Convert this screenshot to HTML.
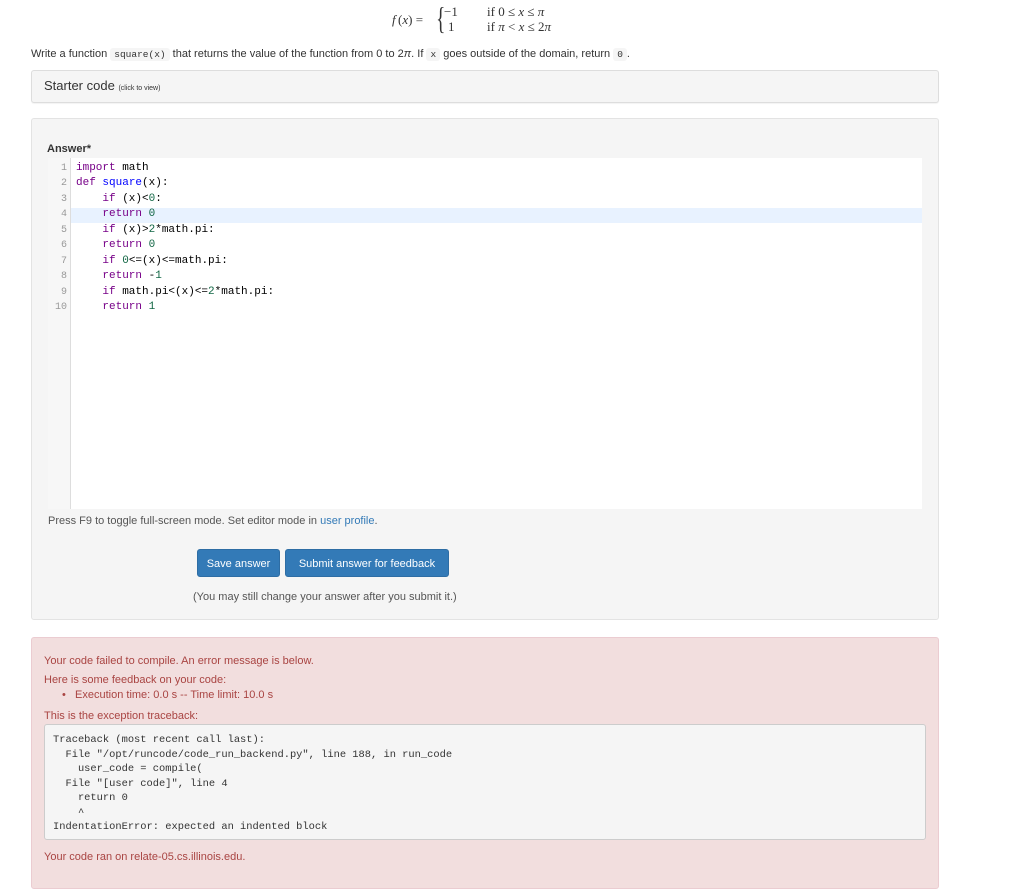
<!DOCTYPE html>
<html><head><meta charset="utf-8"><style>
body{margin:0;width:1024px;height:878px;overflow:hidden;background:#fff;font-family:"Liberation Sans",sans-serif;font-size:11px;color:#333;position:relative}
.a{position:absolute}
code{font-family:"Liberation Mono",monospace;font-size:9.5px;background:#f5f5f5;padding:1px 4px;border-radius:3px;color:#333}
.ser{font-family:"Liberation Serif",serif;font-size:13px}
.cl{position:absolute;left:76px;font-family:"Liberation Mono",monospace;font-size:11px;color:#000;white-space:pre}
.ln{position:absolute;left:48px;width:19px;text-align:right;font-family:"Liberation Mono",monospace;font-size:10px;color:#999}
.k{color:#708}.d{color:#00f}.n{color:#164}
.btn{position:absolute;top:549px;height:28px;background:#337ab7;border:1px solid #2e6da4;border-radius:3px;color:#fff;font-size:11px;line-height:28px;text-align:center;box-sizing:border-box}
.e{position:absolute;left:44px;color:#a94442;font-size:11px}
pre{margin:0;font-family:"Liberation Mono",monospace;font-size:10.4px;line-height:14.5px;color:#333}
</style></head><body>
<div class="a ser" style="left:392px;top:12px;font-style:italic">f</div>
<div class="a ser" style="left:398px;top:12px">(<i>x</i>) =</div>
<div class="a ser" style="left:433px;top:2px;font-size:32px;line-height:32px;transform:scaleX(.6)">{</div>
<div class="a ser" style="left:444px;top:4px">−1</div>
<div class="a ser" style="left:448px;top:19px">1</div>
<div class="a ser" style="left:487px;top:4px">if 0 ≤ <i>x</i> ≤ <i>π</i></div>
<div class="a ser" style="left:487px;top:19px">if <i>π</i> &lt; <i>x</i> ≤ 2<i>π</i></div>
<div class="a" style="left:31px;top:48px">Write a function <code>square(x)</code> that returns the value of the function from 0 to 2<i>π</i>. If <code>x</code> goes outside of the domain, return <code>0</code>.</div>
<div class="a" style="left:31px;top:70px;width:906px;height:31px;background:#f5f5f5;border:1px solid #ddd;border-radius:3px;box-shadow:0 1px 1px rgba(0,0,0,.05)"></div>
<div class="a" style="left:44px;top:78px;font-size:13px;color:#333">Starter code <span style="font-size:7px">(click to view)</span></div>
<div class="a" style="left:31px;top:118px;width:906px;height:500px;background:#f5f5f5;border:1px solid #e3e3e3;border-radius:3px"></div>
<div class="a" style="left:47px;top:143px;font-weight:bold;font-size:11px">Answer*</div>
<div class="a" style="left:48px;top:158px;width:874px;height:351px;background:#fff"></div>
<div class="a" style="left:48px;top:158px;width:22px;height:351px;background:#f7f7f7;border-right:1px solid #ddd"></div>
<div class="a" style="left:71px;top:208px;width:851px;height:15px;background:#e8f2ff"></div>
<div class="ln" style="top:163px">1</div><div class="cl" style="top:162px"><span class="k">import</span> math</div>
<div class="ln" style="top:178px">2</div><div class="cl" style="top:177px"><span class="k">def</span> <span class="d">square</span>(x):</div>
<div class="ln" style="top:194px">3</div><div class="cl" style="top:193px">    <span class="k">if</span> (x)&lt;<span class="n">0</span>:</div>
<div class="ln" style="top:209px">4</div><div class="cl" style="top:208px">    <span class="k">return</span> <span class="n">0</span></div>
<div class="ln" style="top:225px">5</div><div class="cl" style="top:224px">    <span class="k">if</span> (x)&gt;<span class="n">2</span>*math.pi:</div>
<div class="ln" style="top:240px">6</div><div class="cl" style="top:239px">    <span class="k">return</span> <span class="n">0</span></div>
<div class="ln" style="top:256px">7</div><div class="cl" style="top:255px">    <span class="k">if</span> <span class="n">0</span>&lt;=(x)&lt;=math.pi:</div>
<div class="ln" style="top:271px">8</div><div class="cl" style="top:270px">    <span class="k">return</span> -<span class="n">1</span></div>
<div class="ln" style="top:287px">9</div><div class="cl" style="top:286px">    <span class="k">if</span> math.pi&lt;(x)&lt;=<span class="n">2</span>*math.pi:</div>
<div class="ln" style="top:302px">10</div><div class="cl" style="top:301px">    <span class="k">return</span> <span class="n">1</span></div>
<div class="a" style="left:48px;top:515px;color:#555">Press F9 to toggle full-screen mode. Set editor mode in <span style="color:#337ab7">user profile</span>.</div>
<div class="btn" style="left:197px;width:83px">Save answer</div>
<div class="btn" style="left:285px;width:164px">Submit answer for feedback</div>
<div class="a" style="left:193px;top:591px;color:#555">(You may still change your answer after you submit it.)</div>
<div class="a" style="left:31px;top:637px;width:906px;height:250px;background:#f2dede;border:1px solid #ebccd1;border-radius:3px"></div>
<div class="e" style="top:655px">Your code failed to compile. An error message is below.</div>
<div class="e" style="top:674px">Here is some feedback on your code:</div>
<div class="e" style="left:62px;top:689px">•&nbsp;&nbsp;&nbsp;Execution time: 0.0 s -- Time limit: 10.0 s</div>
<div class="e" style="top:710px">This is the exception traceback:</div>
<div class="a" style="left:44px;top:724px;width:882px;height:116px;background:#f5f5f5;border:1px solid #ccc;border-radius:3px;box-sizing:border-box;padding:8px 8px">
<pre>Traceback (most recent call last):
  File "/opt/runcode/code_run_backend.py", line 188, in run_code
    user_code = compile(
  File "[user code]", line 4
    return 0
    ^
IndentationError: expected an indented block</pre></div>
<div class="e" style="top:851px">Your code ran on relate-05.cs.illinois.edu.</div>
</body></html>
